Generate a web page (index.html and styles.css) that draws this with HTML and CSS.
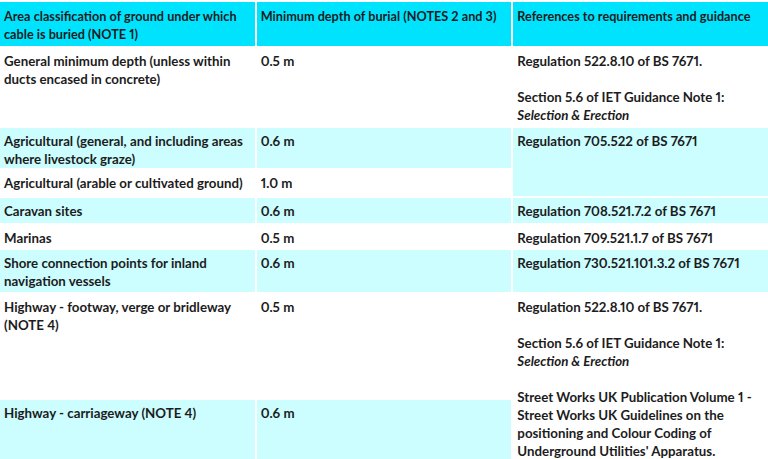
FILE: index.html
```html
<!DOCTYPE html>
<html lang="en">
<head>
<meta charset="utf-8">
<title>Cable burial depths</title>
<link rel="stylesheet" href="styles.css">
</head>
<body>
<div class="table">
  <div class="cell head">Area classification of ground under which cable is buried (NOTE 1)</div>
  <div class="cell head">Minimum depth of burial (NOTES 2 and 3)</div>
  <div class="cell head">References to requirements and guidance</div>

  <div class="cell">General minimum depth (unless within ducts encased in concrete)</div>
  <div class="cell">0.5 m</div>
  <div class="cell">
    <p>Regulation 522.8.10 of BS 7671.</p>
    <p>Section 5.6 of IET Guidance Note 1:<br><em>Selection &amp; Erection</em></p>
  </div>

  <div class="cell alt">Agricultural (general, and including areas where livestock graze)</div>
  <div class="cell alt">0.6 m</div>
  <div class="cell alt span2">Regulation 705.522 of BS 7671</div>

  <div class="cell">Agricultural (arable or cultivated ground)</div>
  <div class="cell">1.0 m</div>

  <div class="cell alt">Caravan sites</div>
  <div class="cell alt">0.6 m</div>
  <div class="cell alt">Regulation 708.521.7.2 of BS 7671</div>

  <div class="cell">Marinas</div>
  <div class="cell">0.5 m</div>
  <div class="cell">Regulation 709.521.1.7 of BS 7671</div>

  <div class="cell alt">Shore connection points for inland navigation vessels</div>
  <div class="cell alt">0.6 m</div>
  <div class="cell alt">Regulation 730.521.101.3.2 of BS 7671</div>

  <div class="cell">Highway - footway, verge or bridleway (NOTE 4)</div>
  <div class="cell">0.5 m</div>
  <div class="cell span2">
    <p>Regulation 522.8.10 of BS 7671.</p>
    <p>Section 5.6 of IET Guidance Note 1:<br><em>Selection &amp; Erection</em></p>
    <p>Street Works UK Publication Volume 1 - Street Works UK Guidelines on the positioning and Colour Coding of Underground Utilities' Apparatus.</p>
  </div>

  <div class="cell alt">Highway - carriageway (NOTE 4)</div>
  <div class="cell alt">0.6 m</div>
</div>
</body>
</html>
```

FILE: styles.css
```css
html, body {
  margin: 0;
  padding: 0;
  background: #ffffff;
}

body {
  font-family: "Lato", "Noto Sans", sans-serif;
  font-weight: 700;
  font-size: 13.3px;
  line-height: 18px;
  color: #1c1c1c;
  font-variant-numeric: proportional-nums;
  overflow: hidden;
}

.table {
  display: grid;
  grid-template-columns: 1fr 1fr 1fr;
  grid-template-rows: 44px 78px 40px 26px 25px 23px 42px 104px 62px;
  gap: 2px;
  padding-top: 2px;
  background: #ffffff;
}

.cell {
  background: #ffffff;
  padding: 4px 4px 0 4px;
  overflow: hidden;
}

.cell.head {
  background: #00e3ff;
  padding-top: 5px;
  font-size: 12.7px;
}

.cell.alt {
  background: #ccfdff;
}

.span2 {
  grid-row: span 2;
}

.cell p {
  margin: 0 0 18px 0;
}

.cell p:last-child {
  margin-bottom: 0;
}

em {
  font-style: italic;
}
```
